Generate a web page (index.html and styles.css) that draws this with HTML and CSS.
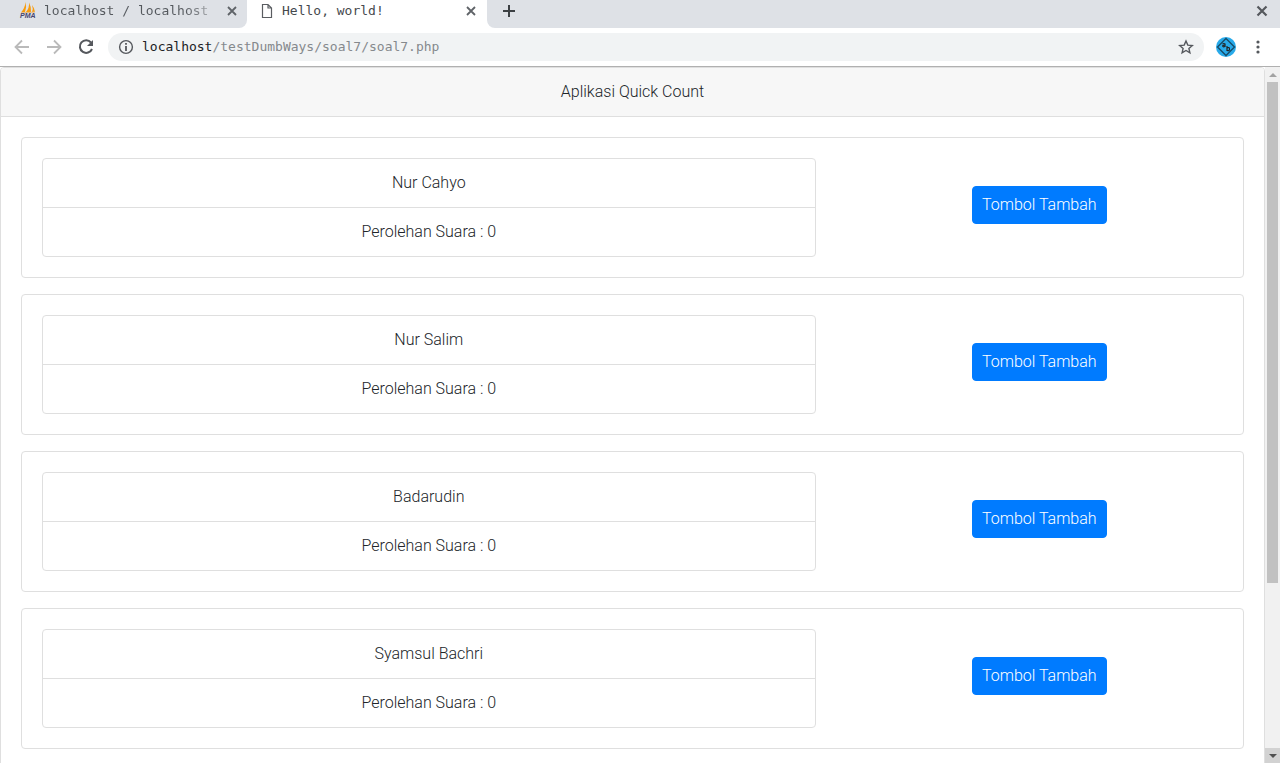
FILE: index.html
```html
<!DOCTYPE html>
<html lang="id">
<head>
<meta charset="utf-8">
<title>Hello, world!</title>
<link rel="stylesheet" href="styles.css">
</head>
<body>
<header class="browser">
  <div class="tabs">
    <div class="tab tab-idle">
      <svg class="favicon" width="18" height="20" viewBox="0 0 18 20" aria-hidden="true">
        <path d="M6.500 1Q6 7 2 11.500L6 11Q8 6 6.500 1ZM10 1.500Q10.500 7 7 11L12 11Q12.500 6 10 1.500ZM13 4Q14.500 8 13 11L16 11Q15.500 7 13 4Z" fill="#f89c0e"/>
        <path d="M2 12L16 11" stroke="#e7b978" stroke-width="1"/>
        <text x="1" y="17" class="pma">PMA</text>
      </svg>
      <span class="tab-title fade">localhost / localhost</span>
      <button class="icon-btn" aria-label="Tutup tab"><svg width="10" height="10" viewBox="0 0 10 10"><path d="M1 1L9 9M9 1L1 9" stroke="#5f6368" stroke-width="1.800"/></svg></button>
    </div>
    <div class="tab tab-active">
      <svg width="12" height="16" viewBox="0 0 12 16" aria-hidden="true"><path d="M1.500 1.500H7L10.500 5V14.500H1.500ZM7 1.500V5H10.500" fill="none" stroke="#5a5d61" stroke-width="1.200"/></svg>
      <span class="tab-title">Hello, world!</span>
      <button class="icon-btn" aria-label="Tutup tab"><svg width="10" height="10" viewBox="0 0 10 10"><path d="M1 1L9 9M9 1L1 9" stroke="#5f6368" stroke-width="1.800"/></svg></button>
    </div>
    <div class="strip">
      <button class="icon-btn" aria-label="Tab baru"><svg width="12" height="12" viewBox="0 0 12 12"><path d="M6 0V12M0 6H12" stroke="#3c4043" stroke-width="2"/></svg></button>
      <button class="icon-btn" aria-label="Tutup jendela"><svg width="12" height="12" viewBox="0 0 12 12"><path d="M1.500 1.500L10.500 10.500M10.500 1.500L1.500 10.500" stroke="#55585d" stroke-width="2.200"/></svg></button>
    </div>
  </div>
  <div class="toolbar">
    <div class="nav">
      <button class="icon-btn" aria-label="Kembali"><svg width="16" height="16" viewBox="0 0 16 16"><path d="M15 8H2M8 1.500L1.500 8L8 14.500" fill="none" stroke="#bababa" stroke-width="1.800"/></svg></button>
      <button class="icon-btn" aria-label="Maju"><svg width="16" height="16" viewBox="0 0 16 16"><path d="M1 8H14M8 1.500L14.500 8L8 14.500" fill="none" stroke="#bababa" stroke-width="1.800"/></svg></button>
      <button class="icon-btn" aria-label="Muat ulang"><svg width="16" height="16" viewBox="0 0 16 16"><path d="M13 3.500A6.300 6.300 0 1 0 14 10" fill="none" stroke="#55585d" stroke-width="2"/><path d="M15 1V7H9Z" fill="#55585d"/></svg></button>
    </div>
    <div class="address">
      <svg width="16" height="16" viewBox="0 0 16 16" aria-hidden="true"><circle cx="8" cy="8" r="6.400" fill="none" stroke="#55585d" stroke-width="1.400"/><path d="M8 7V12M8 4V5.800" stroke="#55585d" stroke-width="1.800"/></svg>
      <span class="url"><b>localhost</b>/testDumbWays/soal7/soal7.php</span>
      <button class="icon-btn" aria-label="Tandai"><svg width="16" height="16" viewBox="0 0 16 16"><path d="M8 2L9.800 6.100L14.300 6.500L10.900 9.400L11.900 13.800L8 11.500L4.100 13.800L5.100 9.400L1.700 6.500L6.200 6.100Z" fill="none" stroke="#55585d" stroke-width="1.400"/></svg></button>
    </div>
    <button class="icon-btn" aria-label="Ekstensi"><svg width="20" height="20" viewBox="0 0 20 20"><circle cx="10" cy="10" r="10" fill="#28aaea"/><path d="M10 1.500L18.500 10L10 18.500L1.500 10Z" fill="none" stroke="#174a66" stroke-width="1.300"/><path d="M6.500 7Q8 6 9 7V10M9 8.300Q6.500 8 6.800 9.300Q8 10.500 9 9M11 9V14M11 11Q13.500 9.500 13.500 12.300Q13 14.500 11 13.300" fill="none" stroke="#222" stroke-width="1.200"/></svg></button>
    <button class="icon-btn" aria-label="Menu"><svg width="4" height="14" viewBox="0 0 4 14"><g fill="#55585d"><circle cx="2" cy="2" r="1.600"/><circle cx="2" cy="7" r="1.600"/><circle cx="2" cy="12" r="1.600"/></g></svg></button>
  </div>
</header>
<div class="viewport">
  <main class="card">
    <h1 class="card-header">Aplikasi Quick Count</h1>
    <div class="card-body">
      <section class="candidate">
        <ul class="list"><li>Nur Cahyo</li><li>Perolehan Suara : 0</li></ul>
        <div class="action"><button class="btn">Tombol Tambah</button></div>
      </section>
      <section class="candidate">
        <ul class="list"><li>Nur Salim</li><li>Perolehan Suara : 0</li></ul>
        <div class="action"><button class="btn">Tombol Tambah</button></div>
      </section>
      <section class="candidate">
        <ul class="list"><li>Badarudin</li><li>Perolehan Suara : 0</li></ul>
        <div class="action"><button class="btn">Tombol Tambah</button></div>
      </section>
      <section class="candidate">
        <ul class="list"><li>Syamsul Bachri</li><li>Perolehan Suara : 0</li></ul>
        <div class="action"><button class="btn">Tombol Tambah</button></div>
      </section>
    </div>
  </main>
  <div class="scrollbar" aria-hidden="true">
    <div class="arrow"><svg width="8" height="4" viewBox="0 0 8 4"><path d="M0 4L4 0L8 4Z" fill="#a3a3a3"/></svg></div>
    <div class="track"><div class="thumb"></div></div>
    <div class="arrow arrow-down"><svg width="8" height="4" viewBox="0 0 8 4"><path d="M0 0L4 4L8 0Z" fill="#505050"/></svg></div>
  </div>
</div>
</body>
</html>
```
FILE: styles.css
```css
* { box-sizing: border-box; }
body {
  margin: 0;
  height: 100vh;
  display: flex;
  flex-direction: column;
  overflow: hidden;
  background: #fff;
  color: #212529;
  font: 300 16px/24px Roboto, "Liberation Sans", sans-serif;
}
button { font: inherit; cursor: pointer; }
svg { display: block; flex: none; }

.browser {
  flex: none;
  font: 400 13px/20px "DejaVu Sans Mono", monospace;
  border-bottom: 1px solid #b0b0b0;
}
.icon-btn { border: 0; padding: 0; background: none; flex: none; }
.tabs { display: flex; height: 28px; background: #fff; }
.tab { display: flex; align-items: center; padding-bottom: 6px; color: #45494d; }
.tab-idle {
  width: 247px;
  padding-left: 19px;
  padding-right: 10px;
  gap: 7px;
  background: #dee1e6;
  border-bottom-right-radius: 8px;
}
.tab-active { width: 240px; padding-left: 14px; padding-right: 11px; gap: 9px; }
.tab-title { flex: 1; white-space: nowrap; overflow: hidden; }
.fade {
  background: linear-gradient(90deg, #54585d 80%, #b4b7bb 96%);
  background-clip: text;
  color: transparent;
}
.favicon { overflow: visible; }
.pma { font: italic 700 7px "Liberation Sans", sans-serif; fill: #46446f; }
.strip {
  flex: 1;
  display: flex;
  align-items: center;
  justify-content: space-between;
  padding: 0 12px 6px 16px;
  background: #dee1e6;
  border-bottom-left-radius: 8px;
}
.toolbar { display: flex; align-items: center; height: 38px; padding: 0 20px 0 14px; gap: 12px; }
.toolbar > .icon-btn:last-child { margin-left: 8px; }
.nav { display: flex; gap: 16px; margin-right: 2px; }
.address {
  flex: 1;
  display: flex;
  align-items: center;
  gap: 8px;
  height: 28px;
  padding: 0 10px;
  border-radius: 14px;
  background: #f1f3f4;
}
.url { flex: 1; color: #85898d; }
.url b { font-weight: 400; color: #202124; }

.viewport { flex: 1; min-height: 0; display: flex; overflow: hidden; }
.card {
  flex: 1;
  align-self: flex-start;
  border: 1px solid #dfdfdf;
  border-radius: 4px;
  text-align: center;
}
.card-header {
  margin: 0;
  padding: 12px 20px;
  font: inherit;
  background: #f7f7f7;
  border-bottom: 1px solid #dfdfdf;
  border-radius: 3px 3px 0 0;
}
.card-body { padding: 20px; }
.candidate {
  display: flex;
  margin-bottom: 16px;
  padding: 20px;
  border: 1px solid #dfdfdf;
  border-radius: 4px;
}
.list {
  flex: 0 0 65.5%;
  margin: 0;
  padding: 0;
  list-style: none;
  border: 1px solid #dfdfdf;
  border-radius: 4px;
}
.list li { padding: 12px 20px; }
.list li + li { border-top: 1px solid #dfdfdf; }
.action { flex: 1; padding: 28px 0 0 40px; }
.btn {
  padding: 6px 9px;
  border: 1px solid #007bff;
  border-radius: 4px;
  background: #007bff;
  color: #fff;
  line-height: 24px;
}

.scrollbar { width: 15px; display: flex; flex-direction: column; background: #f1f1f1; }
.arrow { height: 15px; flex: none; display: flex; align-items: center; justify-content: center; }
.arrow-down { background: #d2d2d2; }
.track { flex: 1; padding: 0 2px; }
.thumb { height: 75.2%; background: #c1c1c1; }
```
